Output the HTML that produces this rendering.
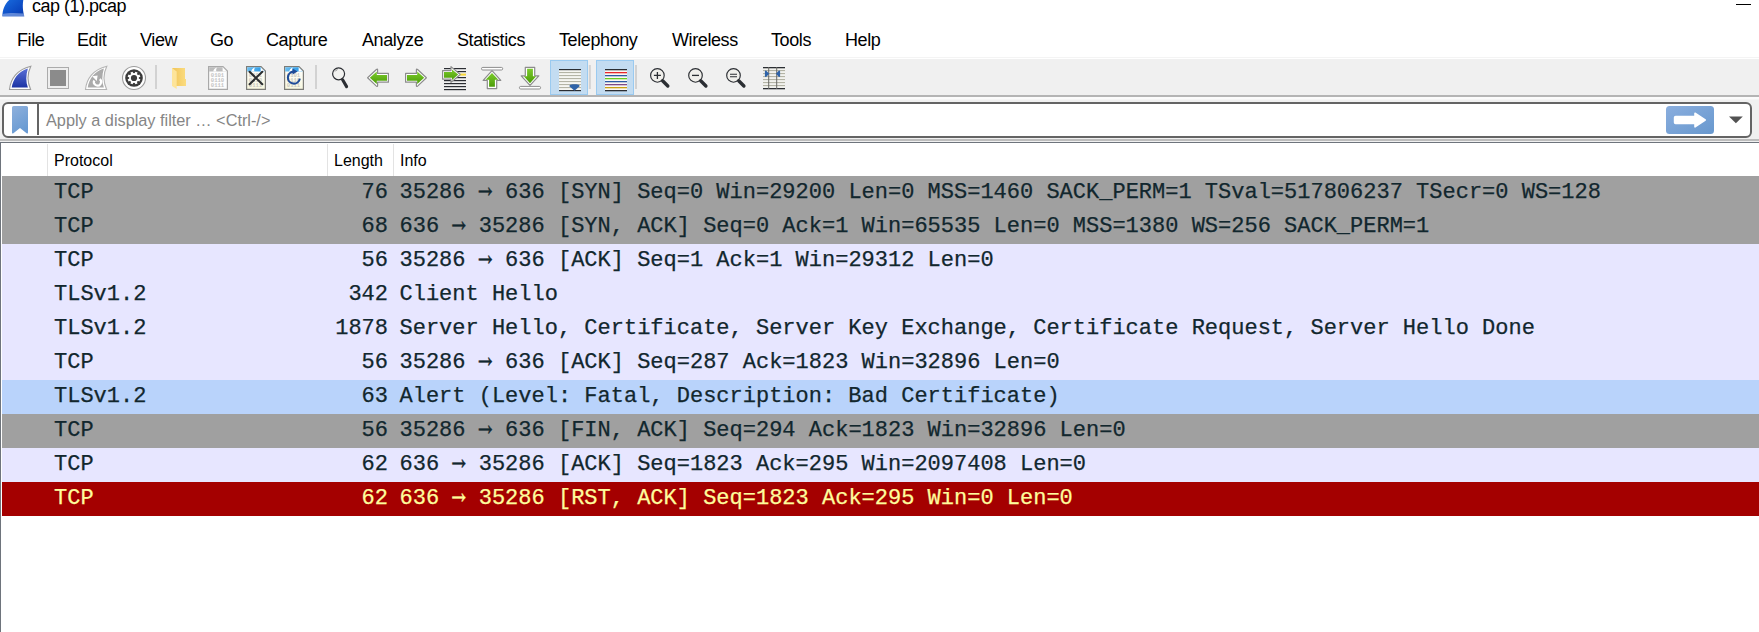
<!DOCTYPE html>
<html><head><meta charset="utf-8">
<style>
*{margin:0;padding:0;box-sizing:border-box}
html,body{width:1759px;height:632px;overflow:hidden;background:#fff;position:relative;font-family:"Liberation Sans",sans-serif}
.abs{position:absolute}
#title{left:32px;top:-4px;font-size:18px;line-height:20px;letter-spacing:-0.5px;color:#000;white-space:nowrap}
#minbtn{left:1736px;top:4px;width:15px;height:1px;background:#000}
.menu{position:absolute;top:29.6px;font-size:18px;letter-spacing:-0.4px;color:#000;white-space:nowrap;line-height:20px}
#toolbar{left:0;top:57px;width:1759px;height:41px;background:#f0f0f0}
#tbtop1{left:0;top:57px;width:1759px;height:1px;background:#f4f4f4}
#tbtop2{left:0;top:58px;width:1759px;height:1px;background:#fff}
#tbbot{left:0;top:95px;width:1759px;height:2px;background:#b4b4b4}
#tbbot2{left:0;top:97px;width:1759px;height:2px;background:#fbfbfb;z-index:1}
#tbbot3{left:0;top:99px;width:1759px;height:1px;background:#f5f5f5;z-index:1}
#filterarea{left:0;top:98px;width:1759px;height:44px;background:#f0f0f0}
#fbox{left:2px;top:102px;width:1750px;height:36px;border:2px solid #646464;border-radius:6px;background:#fff}
#fph{left:46px;top:110px;font-size:16.3px;color:#858585;white-space:nowrap;line-height:20px}
#fsep{left:37px;top:104px;width:2px;height:31px;background:#646464}
#hdrline1{left:0;top:139px;width:1759px;height:2px;background:#bdbdbd}
#hdrline2{left:0;top:142px;width:1759px;height:1px;background:#6e747c}
#list{left:0;top:143px;width:1759px;height:489px;background:#fff}
#lborder{left:0;top:142px;width:1px;height:490px;background:#6e747c}
.hd{position:absolute;top:151px;font-size:16px;color:#000;line-height:20px}
.hsep{position:absolute;top:144px;width:1px;height:32px;background:#e3e3e3}
.row{position:absolute;left:2px;width:1757px;height:34px;font-family:"Liberation Mono",monospace;font-size:22px;color:#12272e;white-space:pre;-webkit-text-stroke:0.25px currentColor}
.row span{position:absolute;top:5px;line-height:24px}
.r1{background:#a0a0a0}
.r2{background:#e7e6ff}
.r3{background:#b9d3fb}
.r4{background:#a40000;color:#fffc9c}
.c1{left:52px}
.c2{right:1371px;text-align:right}
.c3{left:397.5px}
.ar{display:inline-block;font-style:normal;transform:translateY(-4px) scale(1,1.5);-webkit-text-stroke:0.3px currentColor}
</style></head><body>
<!-- title bar -->
<svg class="abs" style="left:0;top:0" width="30" height="20" viewBox="0 0 30 20"><defs><linearGradient id="gtfin" x1="0" y1="0" x2="1" y2="1"><stop offset="0" stop-color="#1a6ee0"/><stop offset="0.7" stop-color="#0b47c0"/><stop offset="1" stop-color="#0a3aa8"/></linearGradient></defs>
<path d="M2.4 16.2 C2.6 10 4.2 4.5 9.8 -0.6 H23.4 C22.6 4 22.4 9 24.2 16.2 Z" fill="url(#gtfin)"/>
<path d="M2.6 14 C8 12.6 16 12.8 23.6 13.4 L24.4 16.4 H2.3 Z" fill="#7c9ee0" opacity="0.75"/>
</svg>
<div id="title" class="abs">cap (1).pcap</div>
<div id="minbtn" class="abs"></div>
<!-- menu -->
<div class="menu" style="left:17px">File</div>
<div class="menu" style="left:77px">Edit</div>
<div class="menu" style="left:140px">View</div>
<div class="menu" style="left:210px">Go</div>
<div class="menu" style="left:266px">Capture</div>
<div class="menu" style="left:362px">Analyze</div>
<div class="menu" style="left:457px">Statistics</div>
<div class="menu" style="left:559px">Telephony</div>
<div class="menu" style="left:672px">Wireless</div>
<div class="menu" style="left:771px">Tools</div>
<div class="menu" style="left:845px">Help</div>
<!-- toolbar -->
<div id="toolbar" class="abs"></div>
<div id="tbtop1" class="abs"></div>
<div id="tbtop2" class="abs"></div>
<div id="tbbot" class="abs"></div>
<div id="tbbot2" class="abs"></div>
<div id="tbbot3" class="abs"></div>
<div id="filterarea" class="abs"></div>
<svg class="abs" style="left:0;top:0" width="800" height="100" viewBox="0 0 800 100">
<defs>
<linearGradient id="gfin" x1="0" y1="0" x2="0" y2="1"><stop offset="0" stop-color="#5a6fd6"/><stop offset="1" stop-color="#1c34a4"/></linearGradient>
<linearGradient id="ggreen" x1="0" y1="0" x2="0" y2="1"><stop offset="0" stop-color="#7ccc2c"/><stop offset="1" stop-color="#4c9c08"/></linearGradient>
<linearGradient id="gfold" x1="0" y1="0" x2="1" y2="0"><stop offset="0" stop-color="#f0c458"/><stop offset="1" stop-color="#fbdc80"/></linearGradient>
<linearGradient id="gdochdr" x1="0" y1="0" x2="1" y2="0"><stop offset="0" stop-color="#6cbef0"/><stop offset="1" stop-color="#1e94e6"/></linearGradient>
<linearGradient id="gdocbody" x1="0" y1="0" x2="0" y2="1"><stop offset="0" stop-color="#ffffff"/><stop offset="1" stop-color="#f8f8e0"/></linearGradient>
</defs>
<!-- 1 shark fin -->
<path d="M9.5 89.5 C10.5 79 17 69.5 30.8 66.2 C27.5 73 27.3 82 30.6 89.5 Z" fill="#fff" stroke="#9c9c9c" stroke-width="1.1"/>
<path d="M11.7 87.6 C13 79 18.5 71 27.9 68.4 C25.8 75 25.8 82 27.9 87.6 Z" fill="url(#gfin)"/>
<!-- 2 stop -->
<rect x="47.5" y="67.5" width="21" height="21" fill="#eeeeee" stroke="#ababab" stroke-width="1"/>
<rect x="50" y="70" width="16" height="16" fill="#8b8b8b"/>
<!-- 3 restart fin -->
<path d="M85.5 89.5 C86.5 79 93 69.5 106.8 66.2 C103.5 73 103.3 82 106.6 89.5 Z" fill="#fff" stroke="#b4b4b4" stroke-width="1.1"/>
<path d="M87.7 87.6 C89 79 94.5 71 103.9 68.4 C101.8 75 101.8 82 103.9 87.6 Z" fill="#ababab"/>
<path d="M94.2 80.5 A3.6 3.6 0 1 0 99.8 79.2" fill="none" stroke="#fff" stroke-width="2.2"/>
<path d="M92.2 76.2 L97.6 75.6 L96.8 81 Z" fill="#fff"/>
<!-- 4 gear -->
<circle cx="134" cy="78" r="11.5" fill="#fff" stroke="#9c9c9c" stroke-width="1.1"/>
<circle cx="134" cy="78" r="8.8" fill="#3b3b3b"/>
<g fill="#fff" transform="rotate(22.5 134 78)">
<circle cx="134" cy="78" r="4.9"/>
<rect x="132.8" y="71.6" width="2.4" height="12.8"/>
<rect x="127.6" y="76.8" width="12.8" height="2.4"/>
<rect x="132.8" y="71.6" width="2.4" height="12.8" transform="rotate(45 134 78)"/>
<rect x="127.6" y="76.8" width="12.8" height="2.4" transform="rotate(45 134 78)"/>
</g>
<circle cx="134" cy="78" r="3.1" fill="#3b3b3b"/>
<!-- sep -->
<rect x="155" y="65" width="2" height="24" fill="#d2d2d2"/>
<!-- 6 folder -->
<path d="M172 68 H185 V79 H186 V86 H176 Z" fill="url(#gfold)"/>
<path d="M172 68 L176.7 71.5 V89 L172 86 Z" fill="#fde49a"/>
<!-- 7 file gray -->
<path d="M208.6 66.6 H223 L227.4 71 V89.4 H208.6 Z" fill="#fdfdfd" stroke="#a9a9a9" stroke-width="1.2"/>
<path d="M209.2 67.2 H222.6 L226.8 71.4 H209.2 Z" fill="#bdbdbd"/>
<path d="M213.3 71.6 C213.3 69.5 215 68 217.2 67.4 C216 68.8 215.8 70.5 216.6 71.6 Z" fill="#fff"/>
<path d="M222.6 67.2 V71.4 H226.8" fill="#fff"/>
<g font-family="Liberation Mono" font-size="5.6" fill="#c4c4c4" font-weight="bold"><text x="210.8" y="77.2">0101</text><text x="210.8" y="82">0110</text><text x="210.8" y="86.8">0111</text></g>
<!-- 8 close file -->
<path d="M246.6 66.6 H261 L265.4 71 V89.4 H246.6 Z" fill="url(#gdocbody)" stroke="#7c7c78" stroke-width="1.2"/>
<path d="M247.2 67.2 H260.6 L264.8 71.4 H247.2 Z" fill="url(#gdochdr)"/>
<path d="M251.3 71.6 C251.3 69.5 253 68 255.2 67.4 C254 68.8 253.8 70.5 254.6 71.6 Z" fill="#fff"/>
<path d="M260.6 67.2 V71.4 H264.8 Z" fill="#fff"/>
<g font-family="Liberation Mono" font-size="5.6" fill="#c8c8c0" font-weight="bold"><text x="248.8" y="77.2">0101</text><text x="248.8" y="82">0110</text><text x="248.8" y="86.8">0111</text></g>
<path d="M249.6 71.8 L262.3 84.2 M262.3 71.8 L249.6 84.2" stroke="#2b2e30" stroke-width="2.1" stroke-linecap="round"/>
<!-- 9 reload file -->
<path d="M284.6 66.6 H299 L303.4 71 V89.4 H284.6 Z" fill="url(#gdocbody)" stroke="#7c7c78" stroke-width="1.2"/>
<path d="M285.2 67.2 H298.6 L302.8 71.4 H285.2 Z" fill="url(#gdochdr)"/>
<path d="M289.3 71.6 C289.3 69.5 291 68 293.2 67.4 C292 68.8 291.8 70.5 292.6 71.6 Z" fill="#fff"/>
<path d="M298.6 67.2 V71.4 H302.8 Z" fill="#fff"/>
<g font-family="Liberation Mono" font-size="5.6" fill="#c8c8c0" font-weight="bold"><text x="286.8" y="77.2">0101</text><text x="286.8" y="82">0110</text><text x="286.8" y="86.8">0111</text></g>
<path d="M293.6 71.6 A6 6 0 1 0 299.8 78.6" fill="none" stroke="#1e4b98" stroke-width="2.1"/>
<path d="M292.6 68.6 L297.6 71.6 L292.6 74.4 Z" fill="#1e4b98"/>
<!-- sep -->
<rect x="315" y="65" width="2" height="24" fill="#d2d2d2"/>
<!-- 11 magnifier -->
<circle cx="338.6" cy="73.8" r="6" fill="#f2f2f0" stroke="#2b2e33" stroke-width="1.2"/>
<path d="M335 71.5 A4 4 0 0 1 337.5 69.6" fill="none" stroke="#777" stroke-width="0.8"/>
<path d="M342.6 79.8 L346.6 86.6" stroke="#2b2e33" stroke-width="3.1" stroke-linecap="round"/>
<!-- 12 left arrow -->
<g stroke-linejoin="round">
<path d="M367.6 77.8 L376.4 69.5 Q377.6 68.5 377.6 70 V73.4 H388.4 V82.2 H377.6 V85.6 Q377.6 87.1 376.4 86.1 Z" fill="#fff" stroke="#8c8c8c" stroke-width="1.2"/>
<path d="M369.8 77.8 L376.8 71.6 V75 H387 V80.8 H376.8 V83.9 Z" fill="url(#ggreen)"/>
</g>
<!-- 13 right arrow -->
<g stroke-linejoin="round">
<path d="M 426.4 77.8 L 417.6 69.5 Q 416.4 68.5 416.4 70 V 73.4 H 405.6 V 82.2 H 416.4 V 85.6 Q 416.4 87.1 417.6 86.1 Z" fill="#fff" stroke="#8c8c8c" stroke-width="1.2"/>
<path d="M 424.2 77.8 L 417.2 71.6 V 75 H 407 V 80.8 H 417.2 V 83.9 Z" fill="url(#ggreen)"/>
</g>
<!-- 14 goto packet -->
<g fill="#2b2e33">
<rect x="444" y="68" width="22" height="1.2"/><rect x="444" y="71" width="22" height="1.2"/>
<rect x="444" y="77" width="22" height="1.2"/><rect x="444" y="80" width="22" height="1.2"/>
<rect x="444" y="83" width="22" height="1.2"/><rect x="444" y="86" width="22" height="1.2"/>
<rect x="444" y="89" width="22" height="1.2"/>
</g>
<rect x="459" y="73.6" width="7" height="2" fill="#f8d838"/>
<g stroke-linejoin="round">
<path d="M460.2 74.5 L451 66.6 V70.6 H442.6 V79.2 H451 V82.4 Z" fill="#fff" stroke="#8c8c8c" stroke-width="1.2"/>
<path d="M458.2 74.5 L452 69.4 V72 H444 V77.8 H452 V80 Z" fill="url(#ggreen)"/>
</g>
<!-- 15 go first -->
<rect x="481.5" y="67.4" width="21.2" height="2.6" rx="1.3" fill="#fff" stroke="#8c8c8c" stroke-width="1"/>
<g stroke-linejoin="round">
<path d="M492 70.6 L500.8 80.4 H496.7 V88.6 H487.3 V80.4 H483.2 Z" fill="#fff" stroke="#8c8c8c" stroke-width="1.2"/>
<path d="M492 72.9 L498.4 79.8 H494.9 V86.8 H489.1 V79.8 H485.6 Z" fill="url(#ggreen)"/>
</g>
<!-- 16 go last -->
<rect x="519.4" y="86.4" width="21.2" height="2.6" rx="1.3" fill="#fff" stroke="#8c8c8c" stroke-width="1"/>
<g stroke-linejoin="round">
<path d="M530 85.4 L538.8 75.8 H534.7 V67.3 H525.3 V75.8 H521.2 Z" fill="#fff" stroke="#8c8c8c" stroke-width="1.2"/>
<path d="M530 83.2 L536.2 76.2 H532.9 V68.8 H527.1 V76.2 H523.8 Z" fill="url(#ggreen)"/>
</g>
<!-- 17 autoscroll button -->
<rect x="550.5" y="60.5" width="37" height="34" fill="#c3dcf1" stroke="#9acaf0" stroke-width="1"/>
<rect x="559" y="69" width="22" height="22" fill="#f6f6f2"/>
<rect x="559" y="69" width="22" height="1.2" fill="#2b2e33"/>
<g fill="#b4b4a6"><rect x="559" y="72" width="22" height="1.1"/><rect x="559" y="75" width="22" height="1.1"/><rect x="559" y="78" width="22" height="1.1"/><rect x="559" y="81" width="22" height="1.1"/><rect x="559" y="84" width="22" height="1.1"/><rect x="559" y="87" width="22" height="1.1"/></g>
<rect x="559" y="90" width="22" height="1.2" fill="#2b2e33"/>
<path d="M569.4 86.2 C569.4 84.5 572 84.3 574.5 84.3 C577 84.3 579.6 84.5 579.6 86.2 L574.5 90.8 Z" fill="#2f63a8"/>
<rect x="588.8" y="65" width="2" height="24" fill="#d2d2d2"/>
<!-- 19 colorize button -->
<rect x="596.5" y="60.5" width="37" height="34" fill="#c3dcf1" stroke="#9acaf0" stroke-width="1"/>
<rect x="605" y="69" width="22" height="22" fill="#fbf7f4"/>
<rect x="605" y="69" width="22" height="1.3" fill="#2b2e33"/>
<rect x="605" y="72" width="22" height="1.3" fill="#e8282c"/>
<rect x="605" y="75" width="22" height="1.3" fill="#2b5aa4"/>
<rect x="605" y="78" width="22" height="1.3" fill="#68cc22"/>
<rect x="605" y="81" width="22" height="1.3" fill="#2b5aa4"/>
<rect x="605" y="84" width="22" height="1.3" fill="#7c4a88"/>
<rect x="605" y="87" width="22" height="1.3" fill="#c8a014"/>
<rect x="605" y="90" width="22" height="1.3" fill="#2b2e33"/>
<rect x="635" y="65" width="2" height="24" fill="#d2d2d2"/>
<!-- 21-23 zoom -->
<g stroke="#2b2e33">
<circle cx="657.4" cy="75.4" r="6.8" fill="#f0efeb" stroke-width="1.15"/>
<path d="M662.6 80.8 L667.8 86" stroke-width="3.4" stroke-linecap="round"/>
<path d="M653.9 75.4 H660.9 M657.4 71.9 V78.9" stroke-width="1.3"/>
<circle cx="695.5" cy="75.4" r="6.8" fill="#f0efeb" stroke-width="1.15"/>
<path d="M700.7 80.8 L705.9 86" stroke-width="3.4" stroke-linecap="round"/>
<path d="M692 75.4 H699" stroke-width="1.3"/>
<circle cx="733.5" cy="75.4" r="6.8" fill="#f0efeb" stroke-width="1.15"/>
<path d="M738.7 80.8 L743.9 86" stroke-width="3.4" stroke-linecap="round"/>
<path d="M730 74.2 H737 M730 76.7 H737" stroke-width="1.1"/>
</g>
<!-- 24 resize columns -->
<rect x="763" y="67" width="22" height="22" fill="#f2f2ee"/>
<g fill="#b4b4a6"><rect x="763" y="70" width="22" height="1.1"/><rect x="763" y="73" width="22" height="1.1"/><rect x="763" y="76" width="22" height="1.1"/><rect x="763" y="79" width="22" height="1.1"/><rect x="763" y="82" width="22" height="1.1"/><rect x="763" y="85" width="22" height="1.1"/></g>
<rect x="763" y="67" width="22" height="1.3" fill="#2b2e33"/>
<rect x="763" y="88" width="22" height="1.3" fill="#2b2e33"/>
<rect x="768.2" y="67" width="1" height="22" fill="#6a6a66"/>
<rect x="776.2" y="67" width="1" height="22" fill="#6a6a66"/>
<path d="M764.9 71.2 Q764.9 70.3 766.1 70.5 L769.2 73.7 L766.1 76.9 Q764.9 77.1 764.9 76.2 Z M780.1 71.2 Q780.1 70.3 778.9 70.5 L776 73.7 L778.9 76.9 Q780.1 77.1 780.1 76.2 Z" fill="#2f63a8"/>
</svg>

<div id="fbox" class="abs"></div>
<div id="fsep" class="abs"></div>
<svg class="abs" style="left:11px;top:105px" width="18" height="30" viewBox="0 0 18 30"><defs><linearGradient id="gbm" x1="0" y1="0" x2="0.4" y2="1"><stop offset="0" stop-color="#8eb0dc"/><stop offset="1" stop-color="#6a9bd3"/></linearGradient></defs><path d="M1 2.6 Q1 1 2.6 1 H15.4 Q17 1 17 2.6 V27.6 Q17 29.2 15.6 28.2 L9 23 L2.4 28.2 Q1 29.2 1 27.6 Z" fill="url(#gbm)"/></svg>
<svg class="abs" style="left:1660px;top:100px" width="99" height="40" viewBox="1660 100 99 40">
<defs><linearGradient id="gapply" x1="0" y1="0" x2="1" y2="1"><stop offset="0" stop-color="#8aaede"/><stop offset="1" stop-color="#6898ce"/></linearGradient></defs>
<rect x="1666" y="106" width="48" height="28" rx="3.5" fill="url(#gapply)"/>
<path d="M1675.6 116.6 H1695 V113.2 L1705.2 120 L1695 126.8 V123.4 H1675.6 Q1674.6 123.4 1674.6 122.4 V117.6 Q1674.6 116.6 1675.6 116.6 Z" fill="#fff" stroke="#fff" stroke-width="1.6" stroke-linejoin="round"/>
<path d="M1729 116.4 H1742.8 L1735.9 123.2 Z" fill="#525252"/>
</svg>
<div id="fph" class="abs">Apply a display filter … &lt;Ctrl-/&gt;</div>
<div id="hdrline1" class="abs"></div>
<div id="list" class="abs"></div>
<div id="hdrline2" class="abs"></div>
<div id="lborder" class="abs"></div>
<div class="hsep" style="left:47px"></div>
<div class="hsep" style="left:327px"></div>
<div class="hsep" style="left:393px"></div>
<div class="hd" style="left:54px">Protocol</div>
<div class="hd" style="left:334px">Length</div>
<div class="hd" style="left:400px">Info</div>
<!-- rows -->
<div class="row r1" style="top:176px"><span class="c1">TCP</span><span class="c2">76</span><span class="c3">35286 <i class="ar">→</i> 636 [SYN] Seq=0 Win=29200 Len=0 MSS=1460 SACK_PERM=1 TSval=517806237 TSecr=0 WS=128</span></div>
<div class="row r1" style="top:210px"><span class="c1">TCP</span><span class="c2">68</span><span class="c3">636 <i class="ar">→</i> 35286 [SYN, ACK] Seq=0 Ack=1 Win=65535 Len=0 MSS=1380 WS=256 SACK_PERM=1</span></div>
<div class="row r2" style="top:244px"><span class="c1">TCP</span><span class="c2">56</span><span class="c3">35286 <i class="ar">→</i> 636 [ACK] Seq=1 Ack=1 Win=29312 Len=0</span></div>
<div class="row r2" style="top:278px"><span class="c1">TLSv1.2</span><span class="c2">342</span><span class="c3">Client Hello</span></div>
<div class="row r2" style="top:312px"><span class="c1">TLSv1.2</span><span class="c2">1878</span><span class="c3">Server Hello, Certificate, Server Key Exchange, Certificate Request, Server Hello Done</span></div>
<div class="row r2" style="top:346px"><span class="c1">TCP</span><span class="c2">56</span><span class="c3">35286 <i class="ar">→</i> 636 [ACK] Seq=287 Ack=1823 Win=32896 Len=0</span></div>
<div class="row r3" style="top:380px"><span class="c1">TLSv1.2</span><span class="c2">63</span><span class="c3">Alert (Level: Fatal, Description: Bad Certificate)</span></div>
<div class="row r1" style="top:414px"><span class="c1">TCP</span><span class="c2">56</span><span class="c3">35286 <i class="ar">→</i> 636 [FIN, ACK] Seq=294 Ack=1823 Win=32896 Len=0</span></div>
<div class="row r2" style="top:448px"><span class="c1">TCP</span><span class="c2">62</span><span class="c3">636 <i class="ar">→</i> 35286 [ACK] Seq=1823 Ack=295 Win=2097408 Len=0</span></div>
<div class="row r4" style="top:482px"><span class="c1">TCP</span><span class="c2">62</span><span class="c3">636 <i class="ar">→</i> 35286 [RST, ACK] Seq=1823 Ack=295 Win=0 Len=0</span></div>
</body></html>
